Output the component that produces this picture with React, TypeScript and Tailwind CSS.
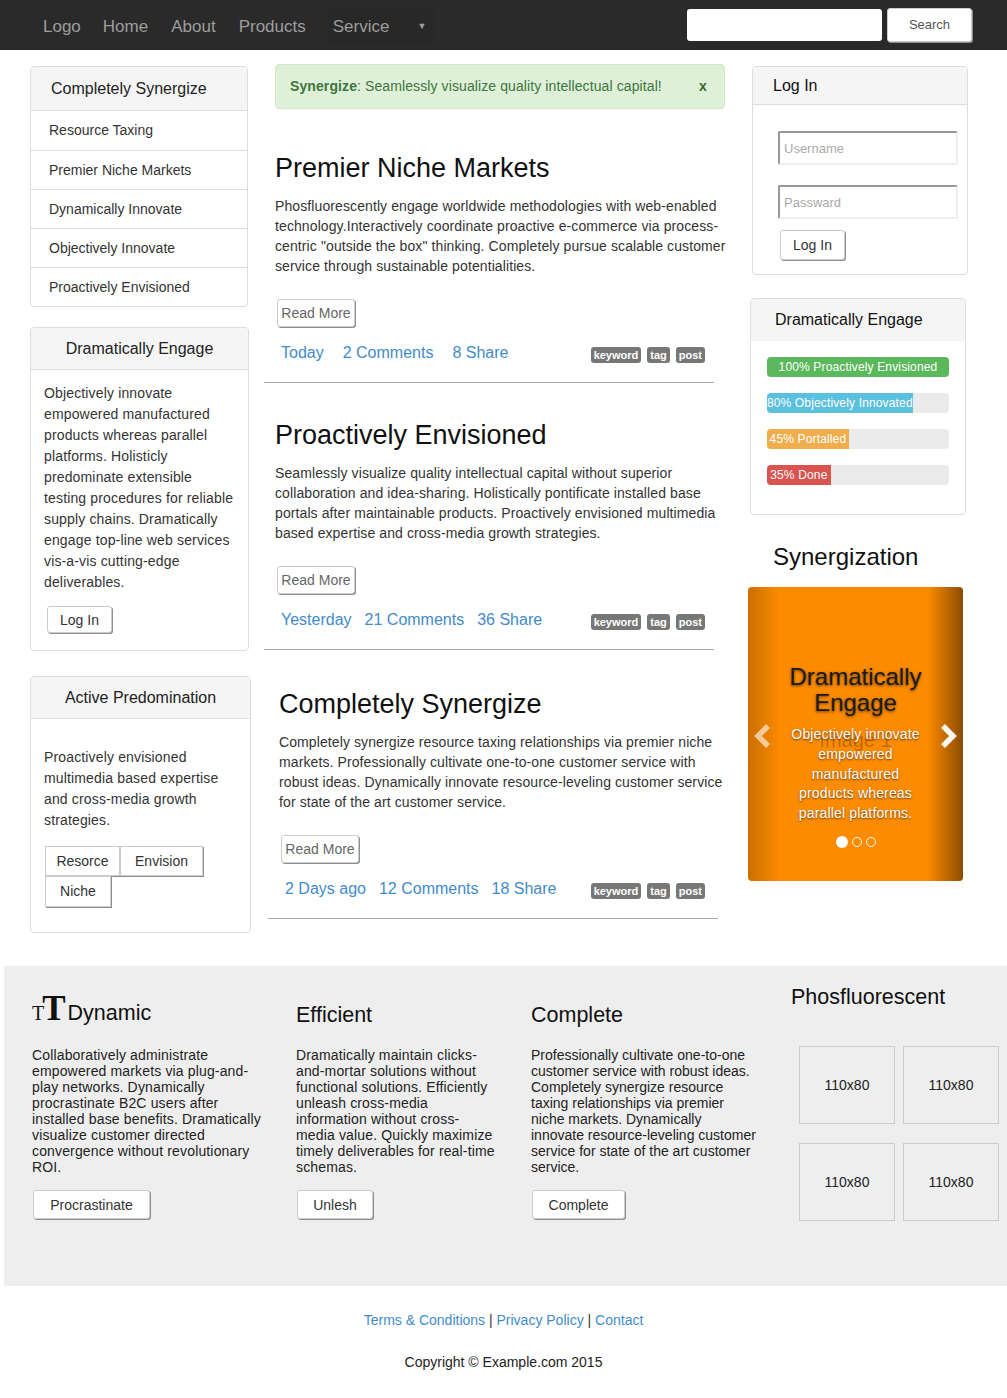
import React from 'react';

const btn =
  'bg-white border border-[#ccc] rounded-[3px] shadow-[1px_1px_0_#8f8f8f] text-[14px] text-[#333] leading-none flex items-center justify-center';

const sideLinks = [
  'Resource Taxing',
  'Premier Niche Markets',
  'Dynamically Innovate',
  'Objectively Innovate',
  'Proactively Envisioned',
];

const articles = [
  {
    title: 'Premier Niche Markets',
    text: 'Phosfluorescently engage worldwide methodologies with web-enabled technology.Interactively coordinate proactive e-commerce via process-centric "outside the box" thinking. Completely pursue scalable customer service through sustainable potentialities.',
    meta: ['Today', '2 Comments', '8 Share'],
    top: 'pt-[43px]',
    gap: 'gap-[19px]',
    shift: '',
  },
  {
    title: 'Proactively Envisioned',
    text: 'Seamlessly visualize quality intellectual capital without superior collaboration and idea-sharing. Holistically pontificate installed base portals after maintainable products. Proactively envisioned multimedia based expertise and cross-media growth strategies.',
    meta: ['Yesterday', '21 Comments', '36 Share'],
    top: 'pt-[36px]',
    gap: 'gap-[13px]',
    shift: '',
  },
  {
    title: 'Completely Synergize',
    text: 'Completely synergize resource taxing relationships via premier niche markets. Professionally cultivate one-to-one customer service with robust ideas. Dynamically innovate resource-leveling customer service for state of the art customer service.',
    meta: ['2 Days ago', '12 Comments', '18 Share'],
    top: 'pt-[38px]',
    gap: 'gap-[13px]',
    shift: 'ml-[4px]',
  },
];

const bars = [
  { label: '100% Proactively Envisioned', pct: 100, color: 'bg-[#5cb85c]' },
  { label: '80% Objectively Innovated', pct: 80, color: 'bg-[#5bc0de]' },
  { label: '45% Portalled', pct: 45, color: 'bg-[#f0ad4e]' },
  { label: '35% Done', pct: 35, color: 'bg-[#d9534f]' },
];

const footerCols = [
  {
    title: 'Efficient',
    text: 'Dramatically maintain clicks-and-mortar solutions without functional solutions. Efficiently unleash cross-media information without cross-media value. Quickly maximize timely deliverables for real-time schemas.',
    button: 'Unlesh',
    col: 'w-[235px]',
    textW: 'w-[200px] tracking-[0.15px]',
    btnW: 'w-[76px]',
  },
  {
    title: 'Complete',
    text: 'Professionally cultivate one-to-one customer service with robust ideas. Completely synergize resource taxing relationships via premier niche markets. Dynamically innovate resource-leveling customer service for state of the art customer service.',
    button: 'Complete',
    col: 'w-[260px]',
    textW: 'w-[226px]',
    btnW: 'w-[93px]',
  },
];

function Navbar() {
  return (
    <div className="h-[50px] bg-[#2a2a2a] flex items-center pl-[43px] pr-[35px] text-[17px] text-[#9d9d9d]">
      <div className="flex items-center pt-[3px]">
        <span>Logo</span>
        <span className="ml-[22px]">Home</span>
        <span className="ml-[23px]">About</span>
        <span className="ml-[23px]">Products</span>
        <div className="ml-[22px] h-[38px] pl-[5px] pr-[8px] flex items-center bg-[#282828]">
          <span>Service</span>
          <span className="ml-[28px] text-[9px]">▼</span>
        </div>
      </div>
      <input className="ml-auto w-[195px] h-[32px] bg-white rounded-[3px] outline-none" />
      <button className="ml-[5px] w-[85px] h-[34px] bg-white border border-[#ccc] rounded-[3px] shadow-[1px_1px_0_#8f8f8f] text-[13px] text-[#555]">
        Search
      </button>
    </div>
  );
}

function LeftColumn() {
  return (
    <aside className="w-[221px] mt-[2px]">
      {/* link list panel */}
      <div className="w-[218px] border border-[#ddd] rounded-[4px] overflow-hidden bg-white">
        <div className="h-[44px] bg-[#f5f5f5] border-b border-[#ddd] flex items-center pl-[20px] text-[16px] text-[#222]">
          Completely Synergize
        </div>
        {sideLinks.map((l, i) => (
          <div
            key={l}
            className={`h-[39px] flex items-center pl-[18px] text-[14px] text-[#333] ${i > 0 ? 'border-t border-[#ddd]' : ''}`}
          >
            {l}
          </div>
        ))}
      </div>

      <div className="w-[219px] mt-[20px] border border-[#ddd] rounded-[4px] overflow-hidden">
        <div className="h-[42px] bg-[#f5f5f5] border-b border-[#ddd] flex items-center justify-center text-[16px] text-[#222]">
          Dramatically Engage
        </div>
        <div className="px-[13px] pt-[13px] pb-[17px]">
          <p className="w-[191px] text-[14px] leading-[21px] tracking-[0.15px] text-[#333]">
            Objectively innovate empowered manufactured products whereas parallel platforms. Holisticly predominate
            extensible testing procedures for reliable supply chains. Dramatically engage top-line web services
            vis-a-vis cutting-edge deliverables.
          </p>
          <button className={`${btn} mt-[13px] ml-[3px] w-[65px] h-[27px]`}>Log In</button>
        </div>
      </div>

      <div className="w-[221px] mt-[25px] border border-[#ddd] rounded-[4px] overflow-hidden">
        <div className="h-[42px] bg-[#f5f5f5] border-b border-[#ddd] flex items-center justify-center text-[16px] text-[#222]">
          Active Predomination
        </div>
        <div className="px-[13px] pt-[28px] pb-[25px]">
          <p className="w-[191px] text-[14px] leading-[21px] tracking-[0.15px] text-[#333]">
            Proactively envisioned multimedia based expertise and cross-media growth strategies.
          </p>
          <div className="mt-[15px] ml-[1px] w-[160px] flex flex-wrap">
            <button className="w-[75px] h-[30px] bg-white border border-[#ccc] shadow-[1px_1px_0_#8f8f8f] text-[14px] text-[#333]">
              Resorce
            </button>
            <button className="w-[83px] h-[30px] bg-white border border-[#ccc] shadow-[1px_1px_0_#8f8f8f] text-[14px] text-[#333]">
              Envision
            </button>
            <button className="w-[66px] h-[31px] bg-white border border-[#ccc] shadow-[1px_1px_0_#8f8f8f] text-[14px] text-[#333]">
              Niche
            </button>
          </div>
        </div>
      </div>
    </aside>
  );
}

function MiddleColumn() {
  return (
    <main className="w-[462px] ml-[13px]">
      <div className="ml-[11px] w-[450px] h-[45px] bg-[#dff0d8] border border-[#d6e9c6] rounded-[4px] flex items-center justify-between pl-[14px] pr-[17px] text-[14px] tracking-[0.1px] text-[#3c763d]">
        <span>
          <b>Synergize</b>: Seamlessly visualize quality intellectual capital!
        </span>
        <b className="text-[#2d6b2d]">x</b>
      </div>

      {articles.map((a) => (
        <article key={a.title} className={`${a.top} ${a.shift}`}>
          <div className="pl-[11px]">
            <h2 className="text-[27px] leading-[32px] text-[#111]">{a.title}</h2>
            <p className="mt-[12px] w-[456px] text-[14px] leading-[20px] tracking-[0.1px] text-[#333]">{a.text}</p>
            <button className={`${btn} mt-[23px] ml-[2px] w-[78px] h-[28px] !text-[#666]`}>Read More</button>
            <div className="mt-[14px] h-[24px] flex items-center justify-between pl-[6px] pr-[21px]">
              <div className={`flex ${a.gap} text-[16px] text-[#428bca]`}>
                {a.meta.map((m) => (
                  <span key={m}>{m}</span>
                ))}
              </div>
              <div className="flex gap-[6px] mt-[3px]">
                {['keyword', 'tag', 'post'].map((t) => (
                  <span
                    key={t}
                    className="bg-[#777] text-white text-[11px] font-bold leading-[16px] px-[3px] rounded-[3px]"
                  >
                    {t}
                  </span>
                ))}
              </div>
            </div>
          </div>
          <div className="mt-[17px] w-[450px] border-t border-[#aaa]" />
        </article>
      ))}
    </main>
  );
}

function Chevron({ dir }: { dir: 'left' | 'right' }) {
  return (
    <svg width="20" height="26" viewBox="0 0 20 26">
      <polyline
        points={dir === 'left' ? '16,3 6,13 16,23' : '4,3 14,13 4,23'}
        fill="none"
        stroke="white"
        strokeWidth="5.5"
        strokeLinejoin="miter"
      />
    </svg>
  );
}

function RightColumn() {
  return (
    <aside className="w-[220px] ml-[22px] mt-[2px]">
      <div className="ml-[4px] w-[216px] border border-[#ddd] rounded-[4px] overflow-hidden">
        <div className="h-[38px] bg-[#f5f5f5] border-b border-[#ddd] flex items-center pl-[20px] text-[16px] text-[#111]">
          Log In
        </div>
        <div className="pl-[25px] pt-[26px] pb-[14px]">
          <input
            placeholder="Username"
            className="w-[180px] h-[34px] border-2 border-t-[#999] border-l-[#999] border-r-[#eee] border-b-[#eee] rounded-[2px] px-[4px] text-[13px] placeholder:text-[#aaa] outline-none"
          />
          <input
            placeholder="Passward"
            className="mt-[20px] w-[180px] h-[34px] border-2 border-t-[#999] border-l-[#999] border-r-[#eee] border-b-[#eee] rounded-[2px] px-[4px] text-[13px] placeholder:text-[#aaa] outline-none"
          />
          <button className={`${btn} mt-[11px] ml-[2px] w-[65px] h-[30px]`}>Log In</button>
        </div>
      </div>

      <div className="mt-[23px] ml-[2px] w-[216px] border border-[#ddd] rounded-[4px] overflow-hidden">
        <div className="h-[42px] bg-[#f5f5f5] flex items-center pl-[24px] text-[16px] text-[#111]">
          Dramatically Engage
        </div>
        <div className="px-[16px] pt-[16px] pb-[29px] flex flex-col gap-[16px]">
          {bars.map((b) => (
            <div key={b.label} className="w-[182px] h-[20px] bg-[#ebebeb] rounded-[4px] overflow-hidden">
              <div
                className={`${b.color} h-full text-white text-[12px] leading-[20px] tracking-[0.15px] whitespace-nowrap flex justify-center`}
                style={{ width: `${b.pct}%` }}
              >
                {b.label}
              </div>
            </div>
          ))}
        </div>
      </div>

      <h3 className="mt-[27px] pl-[25px] text-[24px] leading-[30px] text-[#111]">Synergization</h3>

      <div className="relative mt-[15px] w-[215px] h-[294px] bg-[#fd8b00] rounded-[4px] overflow-hidden">
        <div className="absolute inset-y-0 left-0 w-[32px] bg-linear-to-r from-black/20 to-transparent" />
        <div className="absolute inset-y-0 right-0 w-[36px] bg-linear-to-r from-transparent to-black/45" />
        <div className="absolute inset-x-0 top-[138px] text-center text-[20px] text-black/25">Image 1</div>
        <div className="absolute left-[4px] top-[136px] opacity-60">
          <Chevron dir="left" />
        </div>
        <div className="absolute right-[4px] top-[136px] opacity-95">
          <Chevron dir="right" />
        </div>
        <div className="relative mx-auto w-[152px] pt-[77px] text-center">
          <div className="text-[24px] leading-[26px] text-[#1a1a1a] [text-shadow:0_1px_3px_rgba(0,0,0,0.6)]">
            Dramatically Engage
          </div>
          <p className="mt-[9px] mx-auto w-[132px] text-[14px] leading-[19.75px] tracking-[0.15px] text-white [text-shadow:0_1px_2px_rgba(0,0,0,0.6)]">
            Objectively innovate empowered manufactured products whereas parallel platforms.
          </p>
        </div>
        <div className="absolute left-0 right-0 bottom-[33px] flex justify-center items-center gap-[4px]">
          <span className="w-[12px] h-[12px] rounded-full bg-white" />
          <span className="w-[10px] h-[10px] rounded-full border border-white" />
          <span className="w-[10px] h-[10px] rounded-full border border-white" />
        </div>
      </div>
    </aside>
  );
}

function Footer() {
  return (
    <footer className="mt-[33px] ml-[4px] h-[320px] bg-[#eee] flex pt-[18px] text-[#222]">
      <div className="w-[292px] pl-[28px]">
        <div className="mt-[7px] h-[34px] flex items-baseline text-[#111]">
          <span className="font-['Liberation_Serif',serif] text-[20px] leading-none">T</span>
          <span className="-ml-[2px] font-['Liberation_Serif',serif] text-[35px] font-bold leading-none">T</span>
          <span className="ml-[2px] text-[21.5px] leading-none">Dynamic</span>
        </div>
        <p className="mt-[22px] w-[232px] text-[14px] leading-[16px] tracking-[0.15px]">
          Collaboratively administrate empowered markets via plug-and-play networks. Dynamically procrastinate B2C
          users after installed base benefits. Dramatically visualize customer directed convergence without
          revolutionary ROI.
        </p>
        <button className={`${btn} mt-[15px] ml-[1px] w-[117px] h-[29px] rounded-[2px]`}>Procrastinate</button>
      </div>

      {footerCols.map((c) => (
        <div key={c.title} className={c.col}>
          <h4 className="mt-[18px] text-[21.5px] leading-[26px] text-[#111]">{c.title}</h4>
          <p className={`mt-[19px] ${c.textW} text-[14px] leading-[16px]`}>{c.text}</p>
          <button className={`${btn} mt-[15px] ml-[1px] ${c.btnW} h-[29px] rounded-[2px]`}>{c.button}</button>
        </div>
      ))}

      <div className="flex-1">
        <h4 className="text-[21.5px] leading-[26px] text-[#111]">Phosfluorescent</h4>
        <div className="mt-[36px] ml-[8px] grid grid-cols-[96px_96px] gap-x-[8px] gap-y-[19px]">
          {[0, 1, 2, 3].map((i) => (
            <div
              key={i}
              className="h-[78px] border border-[#ccc] flex items-center justify-center text-[14px] text-[#222]"
            >
              110x80
            </div>
          ))}
        </div>
      </div>
    </footer>
  );
}

export default function App() {
  return (
    <div className="w-[1007px] min-h-[1398px] bg-white font-['Liberation_Sans',Arial,sans-serif]">
      <Navbar />
      <div className="flex pl-[30px] pt-[14px]">
        <LeftColumn />
        <MiddleColumn />
        <RightColumn />
      </div>
      <Footer />
      <div className="mt-[24px] text-center text-[14px] leading-[20px]">
        <span className="text-[#428bca]">Terms &amp; Conditions</span>
        <span className="text-[#333]"> | </span>
        <span className="text-[#428bca]">Privacy Policy</span>
        <span className="text-[#333]"> | </span>
        <span className="text-[#428bca]">Contact</span>
      </div>
      <div className="mt-[22px] pb-[25px] text-center text-[14px] leading-[20px] text-[#222]">
        Copyright © Example.com 2015
      </div>
    </div>
  );
}
